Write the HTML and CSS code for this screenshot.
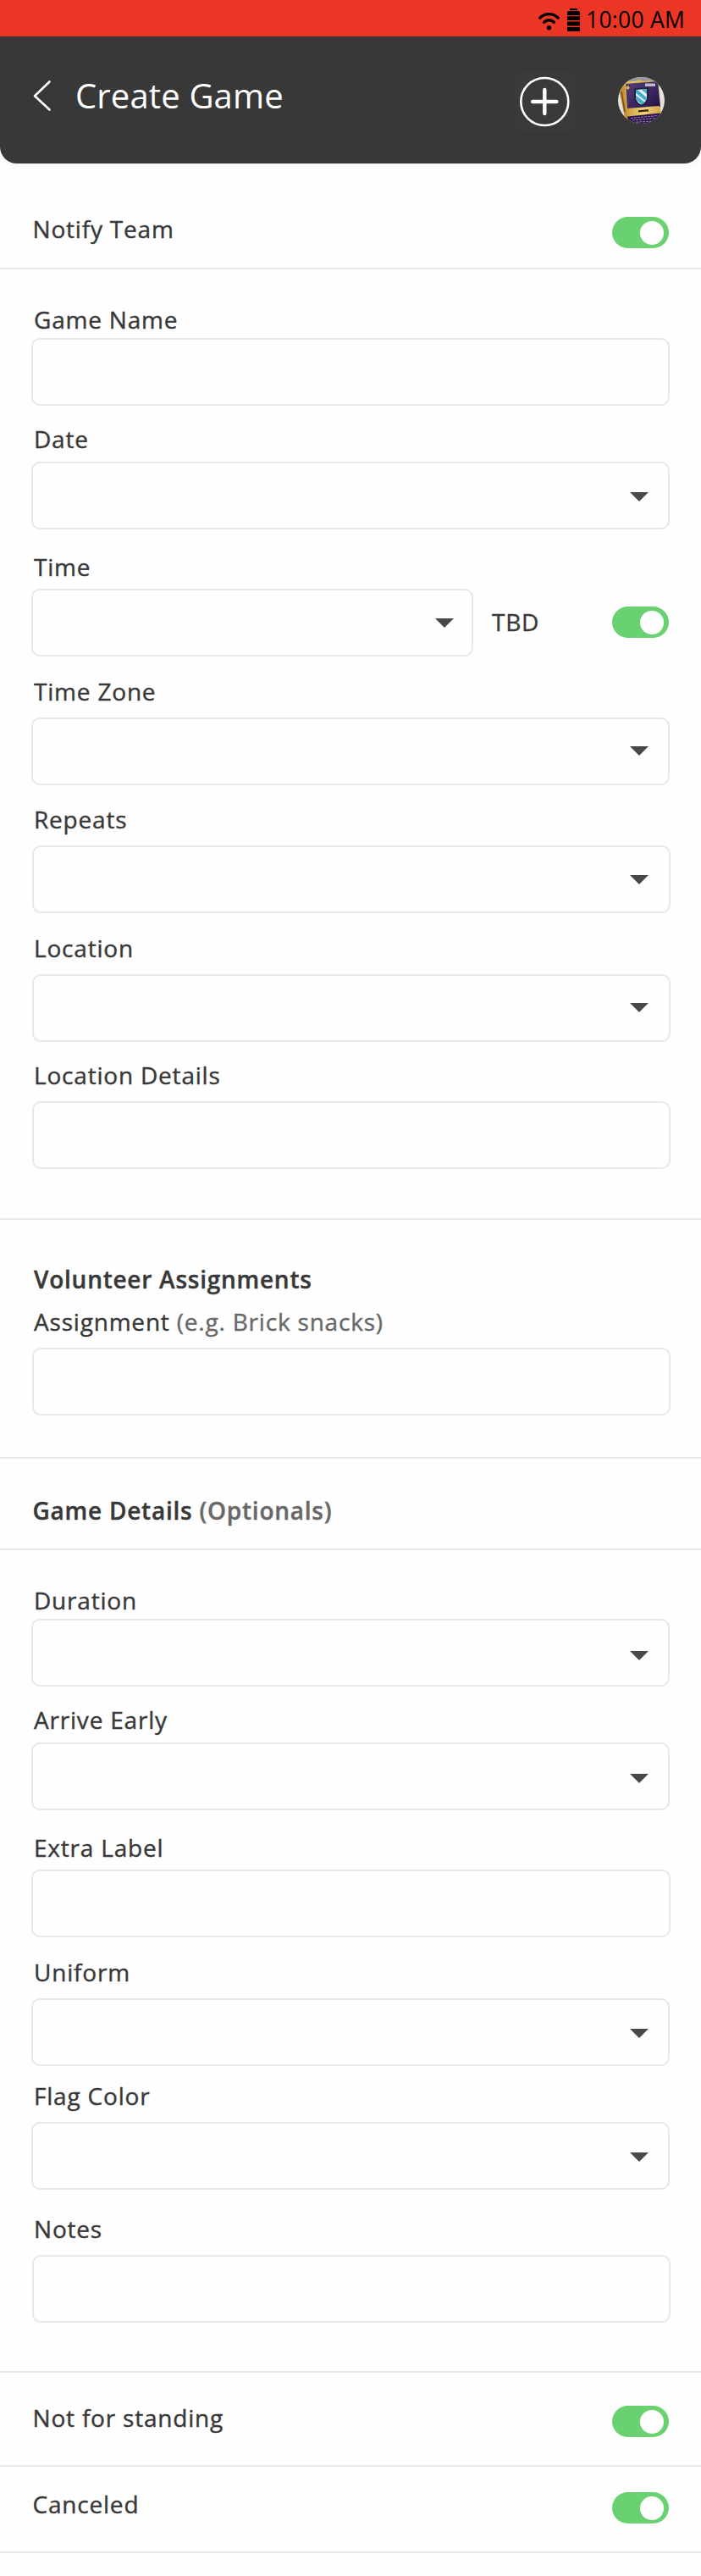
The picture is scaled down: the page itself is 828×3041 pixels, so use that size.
FILE: index.html
```html
<!DOCTYPE html>
<html lang="en">
<head>
<meta charset="utf-8">
<title>Create Game</title>
<link rel="stylesheet" href="styles.css">
</head>
<body>
<div class="status-bar">
  <svg class="wifi" width="25" height="22" viewBox="0 0 25 22" fill="none" stroke="#000" stroke-width="3.4" stroke-linecap="round">
    <path d="M1.8 7.2C7.6 1.1 17.4 1.1 23.2 7.2"/>
    <path d="M6.6 12.2C10 8.9 15 8.9 18.4 12.2"/>
    <circle cx="12.5" cy="18.8" r="2.7" fill="#000" stroke="none"/>
  </svg>
  <svg class="battery" width="15" height="27" viewBox="0 0 15 27" fill="#000">
    <path d="M3 0h9v2H3zM1 3h13v1h1v4H0V4h1zM0 9.3h15v4.7H0zM0 15.6h15v5H0zM0 22h15v5H0z"/>
  </svg>
  <span class="clock">10:00 AM</span>
</div>
<header class="header">
  <svg class="back" width="22" height="38" viewBox="0 0 22 38" fill="none" stroke="#fff" stroke-width="2.6" stroke-linecap="round" stroke-linejoin="round">
    <path d="M19.5 2.5 2 19.3 19.5 35.5"/>
  </svg>
  <h1 class="title">Create Game</h1>
  <svg class="add" width="70" height="71" viewBox="0 0 70 71" fill="none" stroke="#fff">
    <circle cx="34.3" cy="36" r="28" stroke-width="2.6"/>
    <path d="M34.3 21.9v28.2M20.2 36h28.2" stroke-width="4.4" stroke-linecap="round"/>
  </svg>
  <svg class="avatar" width="55" height="55" viewBox="0 0 55 55">
    <defs>
      <clipPath id="disc"><circle cx="27.5" cy="27.5" r="27.5"/></clipPath>
      <clipPath id="shield"><path d="M21 15l13-1v10q0 5-6.500 8.500Q21.500 30 21 24z"/></clipPath>
      <linearGradient id="gold" x1="0" x2="1"><stop offset="0" stop-color="#c99a3c"/><stop offset=".5" stop-color="#f2d478"/><stop offset="1" stop-color="#d2a44a"/></linearGradient>
      <linearGradient id="purple" x1="0" y1="0" x2="1" y2="1"><stop offset="0" stop-color="#564078"/><stop offset="1" stop-color="#24104a"/></linearGradient>
    </defs>
    <g clip-path="url(#disc)">
      <rect width="55" height="55" fill="#e4e2dd"/>
      <rect width="55" height="5" fill="#98979b"/>
      <path d="M1 14l7-6 4 41-4-1z" fill="#c58f35"/>
      <path d="M4 17l4 24" fill="none" stroke="#6f4a25" stroke-width="1.500"/>
      <path d="M7 7l6-3 5 2 6-3 6 2 7-1 7 1 4 3 3 38-39 4z" fill="#e0b65b"/>
      <path d="M9 8l38-3 3 30-39 3z" fill="url(#purple)"/>
      <path d="M10 37l39-3 1 8-39 4z" fill="url(#gold)"/>
      <path d="M11 46.500l39-4v13H12z" fill="#2e1750"/>
      <circle cx="11.500" cy="12.500" r="2" fill="#e3b64a"/>
      <rect x="32" y="7.500" width="12" height="3.500" fill="#b9bccb"/>
      <path d="M19 13.500l17-1v11q0 6.500-8.200 10.500Q19.500 31 19 25z" fill="#1d2333"/>
      <g clip-path="url(#shield)">
        <rect x="18" y="12" width="20" height="24" fill="#dff1f5"/>
        <path d="M16 12l22 18M16 20l20 16M25 10l16 13" stroke="#45a9cf" stroke-width="4"/>
      </g>
      <path d="M24 40.300l12-1" stroke="#352512" stroke-width="2.200"/>
      <path d="M15 48.500l32-3M17 51l27-2.500M21 53.200l18-1" stroke="#a99ab8" stroke-width=".8" stroke-dasharray="3 1"/>
    </g>
  </svg>
</header>
<main>
  <section class="switch-row switch-row--notify">
    <span class="label">Notify Team</span><span class="toggle"></span>
  </section>
  <section class="group group--game">
    <div class="field field--name"><label class="label">Game Name</label><div class="box"></div></div>
    <div class="field field--date"><label class="label">Date</label><div class="box select"></div></div>
    <div class="field field--time"><label class="label">Time</label>
      <div class="time-row">
        <div class="box select"></div>
        <span class="label tbd">TBD</span>
        <span class="toggle"></span>
      </div>
    </div>
    <div class="field field--zone"><label class="label">Time Zone</label><div class="box select"></div></div>
    <div class="field field--repeats shifted"><label class="label">Repeats</label><div class="box select"></div></div>
    <div class="field field--location shifted"><label class="label">Location</label><div class="box select"></div></div>
    <div class="field field--place shifted"><label class="label">Location Details</label><div class="box"></div></div>
  </section>
  <section class="group group--volunteer">
    <h2 class="label heading">Volunteer Assignments</h2>
    <div class="field field--assignment shifted"><label class="label">Assignment <span class="hint">(e.g. Brick snacks)</span></label><div class="box"></div></div>
  </section>
  <section class="group group--heading">
    <h2 class="label heading">Game Details <span class="hint">(Optionals)</span></h2>
  </section>
  <section class="group group--details">
    <div class="field field--duration"><label class="label">Duration</label><div class="box select"></div></div>
    <div class="field field--arrive"><label class="label">Arrive Early</label><div class="box select"></div></div>
    <div class="field field--extra wide"><label class="label">Extra Label</label><div class="box"></div></div>
    <div class="field field--uniform"><label class="label">Uniform</label><div class="box select"></div></div>
    <div class="field field--flag"><label class="label">Flag Color</label><div class="box select"></div></div>
    <div class="field field--notes shifted"><label class="label">Notes</label><div class="box"></div></div>
  </section>
  <section class="switch-row switch-row--standing">
    <span class="label">Not for standing</span><span class="toggle"></span>
  </section>
  <section class="switch-row switch-row--canceled">
    <span class="label">Canceled</span><span class="toggle"></span>
  </section>
</main>
</body>
</html>
```
FILE: styles.css
```css
* { box-sizing: border-box; }

body {
  margin: 0;
  min-height: 3041px;
  background: #fefefe;
  color: #383838;
  font-family: "Open Sans", "Noto Sans", sans-serif;
}

h1, h2 { margin: 0; }
svg { display: block; flex: none; }

/* Status bar and header */
.status-bar {
  display: flex;
  align-items: flex-start;
  height: 43px;
  padding-left: 636px;
  background: #ec3625;
  color: #000;
}
.wifi { margin-top: 14px; }
.battery { margin: 10px 0 0 9px; }
.clock {
  margin: 5px 0 0 7px;
  font-size: 26.5px;
  line-height: 36px;
  letter-spacing: .25px;
  white-space: nowrap;
}

.header {
  display: flex;
  align-items: flex-start;
  height: 150px;
  padding-left: 39px;
  background: #383838;
  border-radius: 0 0 20px 20px;
  box-shadow: 0 3px 8px rgba(0, 0, 0, .04);
}
.back { margin-top: 51px; }
.title {
  width: 520px;
  margin: 43px 0 0 28px;
  color: #fff;
  font-size: 40px;
  font-weight: 400;
  line-height: 54px;
  letter-spacing: .15px;
  white-space: nowrap;
}
.add { margin-top: 41px; background: #3a3a3a; }
.avatar { margin: 48px 0 0 51px; }

/* Shared controls */
.label {
  display: block;
  font-size: 28px;
  font-weight: 400;
  line-height: 38px;
  letter-spacing: .8px;
  white-space: nowrap;
  -webkit-text-stroke: .4px;
}
.heading { font-weight: 600; letter-spacing: .75px; }
.hint { color: #686868; }

.toggle {
  display: flex;
  justify-content: flex-end;
  flex: none;
  width: 67px;
  height: 37px;
  padding: 5px 6px 0 0;
  border-radius: 19px;
  background: #69d16f;
}
.toggle::after {
  content: "";
  width: 28px;
  height: 28px;
  border-radius: 50%;
  background: #fff;
}

.box {
  width: 754px;
  height: 80px;
  border: 2px solid #e8e8e8;
  border-radius: 10px;
}
.select {
  display: flex;
  justify-content: flex-end;
  padding: var(--arrow, 34px) 23px 0 0;
}
.select::after {
  content: "";
  width: 22px;
  height: 11px;
  background: #484848;
  clip-path: polygon(0 0, 100% 0, 50% 100%);
}

/* Rows holding a label and a switch */
.switch-row {
  display: flex;
  align-items: flex-start;
  justify-content: space-between;
  padding: 0 38px 0 38.5px;
  border-bottom: 2px solid #e8e8e8;
}
.switch-row .toggle { margin-top: 5px; }
.switch-row--notify { height: 125px; padding-top: 58px; }
.switch-row--standing { height: 111px; padding-top: 34px; }
.switch-row--canceled { height: 102px; padding-top: 25px; }

/* Groups of fields */
.group {
  padding-left: 37px;
  border-bottom: 2px solid #e8e8e8;
}
.group--game { padding-top: 40px; padding-bottom: 58px; }
.group--volunteer { padding-top: 51px; padding-bottom: 49px; }
.group--volunteer .heading { padding-left: 3px; }
.group--heading { padding: 42px 0 26px 38.5px; }
.group--details { padding-top: 40px; padding-bottom: 57px; }

.field {
  display: flex;
  flex-direction: column;
  gap: 12px;
}
.field > .label { padding-left: 3px; }
.shifted { padding-left: 1px; }
.shifted > .label { padding-left: 2px; }
.shifted .select { padding-right: 24px; }
.wide .box { width: 755px; }

.field--name { gap: 3px; }
.field--date { gap: 8px; margin-top: 20px; }
.field--time { gap: 7px; margin-top: 25px; --arrow: 33px; }
.field--zone { margin-top: 22px; --arrow: 32px; }
.field--repeats { margin-top: 21px; --arrow: 33px; }
.field--location { margin-top: 22px; --arrow: 32px; }
.field--place { margin-top: 20px; }
.field--assignment { margin-top: 12px; }
.field--duration { gap: 3px; --arrow: 36px; }
.field--arrive { gap: 8px; margin-top: 20px; --arrow: 35px; }
.field--extra { gap: 7px; margin-top: 25px; }
.field--uniform { gap: 12px; margin-top: 22px; }
.field--flag { margin-top: 16px; }
.field--notes { margin-top: 27px; }

.time-row { display: flex; align-items: flex-start; }
.time-row .box { width: 522px; padding-right: 21px; }
.tbd { width: 142px; margin: 20px 0 0 22px; }
.time-row .toggle { margin-top: 21px; }
```
